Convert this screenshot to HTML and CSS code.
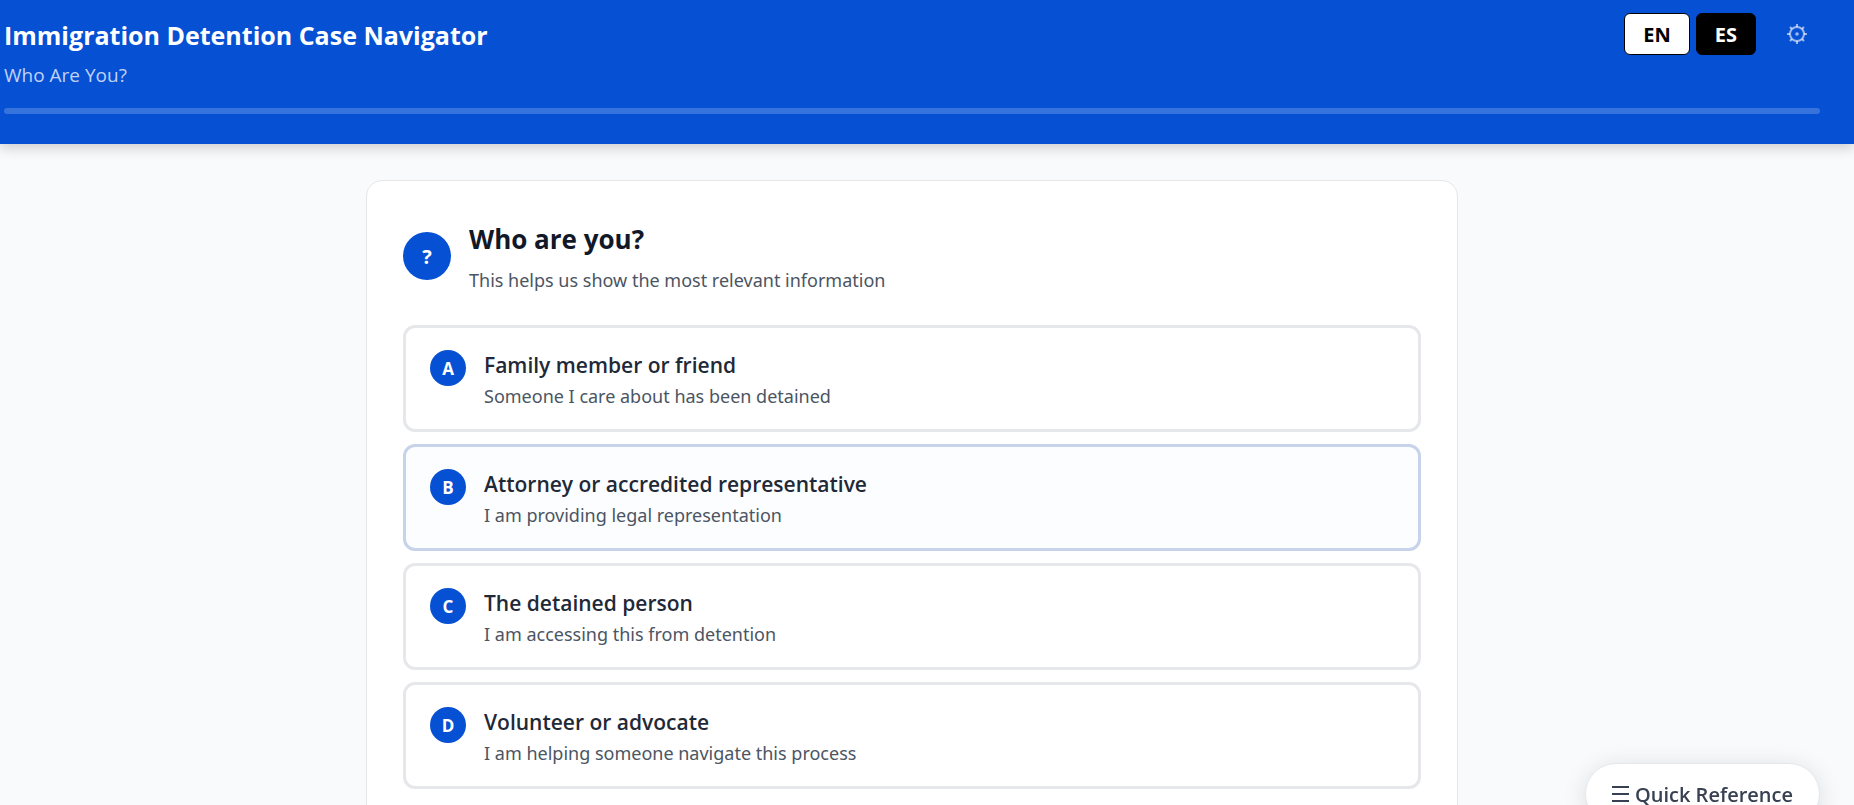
FILE: index.html
```html
<!DOCTYPE html>
<html lang="en">
  <head>
    <meta charset="UTF-8" />
    <meta name="viewport" content="width=device-width, initial-scale=1.0" />
    <title>Immigration Detention Case Navigator</title>
    <link rel="stylesheet" href="styles.css">
  </head>
  <body>
    <header class="header">
      <div class="header-top">
        <div class="header-titles">
          <h1>Immigration Detention Case Navigator</h1>
          <p class="header-step">Who Are You?</p>
        </div>
        <div class="header-actions">
          <button type="button" class="lang-btn active">EN</button>
          <button type="button" class="lang-btn">ES</button>
          <button type="button" class="settings-btn" aria-label="Settings">
            <svg width="20" height="20" viewBox="0 0 20 20" fill="none" stroke="currentColor">
              <circle cx="10" cy="10" r="7" stroke-width="2" />
              <circle cx="10" cy="10" r="1.8" fill="currentColor" stroke="none" />
              <path stroke-width="2" d="M10 0v3M10 17v3M0 10h3M17 10h3M3 3l2 2M15 15l2 2M3 17l2-2M15 5l2-2" />
            </svg>
          </button>
        </div>
      </div>
      <div class="progress" role="progressbar" aria-label="Progress" aria-valuenow="0"></div>
    </header>

    <main class="main">
      <section class="card">
        <div class="question">
          <span class="question-icon">?</span>
          <div>
            <h2>Who are you?</h2>
            <p class="question-help">This helps us show the most relevant information</p>
          </div>
        </div>

        <!-- Answers -->
        <div class="options">
          <button type="button" class="option">
            <span class="option-letter">A</span>
            <span class="option-text">
              <span class="option-title">Family member or friend</span>
              <span class="option-desc">Someone I care about has been detained</span>
            </span>
          </button>
          <button type="button" class="option highlighted">
            <span class="option-letter">B</span>
            <span class="option-text">
              <span class="option-title">Attorney or accredited representative</span>
              <span class="option-desc">I am providing legal representation</span>
            </span>
          </button>
          <button type="button" class="option">
            <span class="option-letter">C</span>
            <span class="option-text">
              <span class="option-title">The detained person</span>
              <span class="option-desc">I am accessing this from detention</span>
            </span>
          </button>
          <button type="button" class="option">
            <span class="option-letter">D</span>
            <span class="option-text">
              <span class="option-title">Volunteer or advocate</span>
              <span class="option-desc">I am helping someone navigate this process</span>
            </span>
          </button>
        </div>
      </section>
    </main>

    <button type="button" class="quick-ref">
      <svg width="17" height="16" viewBox="0 0 17 16" stroke="currentColor" stroke-width="2" aria-hidden="true">
        <path d="M0 1h17M0 8h17M0 15h17" />
      </svg>
      Quick Reference
    </button>
  </body>
</html>
```

FILE: styles.css
```css
* {
  box-sizing: border-box;
}
body {
  margin: 0;
  min-height: 100vh;
  overflow: hidden;
  background-color: #f9fafc;
  color: #111827;
  font-family: "Segoe UI", "Open Sans", sans-serif;
}
h1, h2, p {
  margin: 0;
}
button {
  font-family: inherit;
  cursor: pointer;
}

/* Header */
.header {
  padding: 12px 34px 30px 4px;
  background-color: #0650d4;
  color: white;
  box-shadow: 0 4px 12px rgba(0, 0, 0, 0.18);
}
.header-top {
  display: flex;
  justify-content: space-between;
  align-items: flex-start;
}
.header h1 {
  font-size: 25px;
  line-height: 46px;
}
.header-step {
  font-size: 19px;
  line-height: 34px;
  color: rgba(255, 255, 255, 0.75);
}
.header-actions {
  display: flex;
  align-items: center;
  gap: 6px;
}
.lang-btn {
  padding: 0 18px;
  height: 42px;
  border: 1px solid black;
  border-radius: 6px;
  background-color: black;
  color: white;
  font-size: 20px;
  font-weight: 700;
}
.lang-btn.active {
  background-color: white;
  color: black;
}
.settings-btn {
  display: flex;
  margin-left: 12px;
  padding: 12px 13px;
  border: none;
  background: none;
  color: rgba(255, 255, 255, 0.6);
}
.progress {
  height: 6px;
  margin-top: 16px;
  border-radius: 3px;
  background-color: rgba(255, 255, 255, 0.2);
}

/* Question card */
.main {
  padding: 36px 34px 36px 4px;
}
.card {
  max-width: 1092px;
  margin: 0 auto;
  padding: 36px;
  border: 1px solid #e5e7eb;
  border-radius: 16px;
  background-color: white;
}
.question {
  display: flex;
  align-items: center;
  gap: 18px;
  margin-bottom: 30px;
}
.question-icon {
  display: flex;
  align-items: center;
  justify-content: center;
  width: 48px;
  height: 48px;
  border-radius: 50%;
  background-color: #0650d4;
  color: white;
  font-size: 20px;
  font-weight: 700;
}
.question h2 {
  font-size: 26px;
  line-height: 44px;
}
.question-help {
  margin-top: 4px;
  font-family: "Segoe UI", "Noto Sans", sans-serif;
  font-size: 18px;
  line-height: 30px;
  color: #4b5563;
}
.options {
  display: flex;
  flex-direction: column;
  gap: 12px;
}
.option {
  display: flex;
  align-items: flex-start;
  gap: 18px;
  padding: 21px 24px 19px;
  border: 3px solid #e5e7eb;
  border-radius: 12px;
  background-color: white;
  text-align: left;
}
.option.highlighted {
  border-color: #c7d3ea;
  background-color: #fcfdfe;
}
.option-letter {
  display: flex;
  align-items: center;
  justify-content: center;
  width: 36px;
  height: 36px;
  margin-top: 1px;
  border-radius: 50%;
  background-color: #0650d4;
  color: white;
  font-size: 17px;
  font-weight: 700;
}
.option-text {
  display: flex;
  flex-direction: column;
}
.option-title {
  font-size: 21px;
  font-weight: 600;
  line-height: 33px;
  color: #1f2937;
}
.option-desc {
  font-family: "Segoe UI", "Noto Sans", sans-serif;
  font-size: 18px;
  line-height: 28px;
  color: #4b5563;
}

/* Floating button */
.quick-ref {
  position: fixed;
  right: 34px;
  bottom: -20px;
  display: flex;
  align-items: center;
  gap: 6px;
  height: 62px;
  padding: 0 26px;
  border: 1px solid #e5e7eb;
  border-radius: 31px;
  background-color: white;
  color: #374151;
  font-size: 20px;
  font-weight: 600;
  box-shadow: 0 4px 24px rgba(0, 0, 0, 0.12);
}
```
